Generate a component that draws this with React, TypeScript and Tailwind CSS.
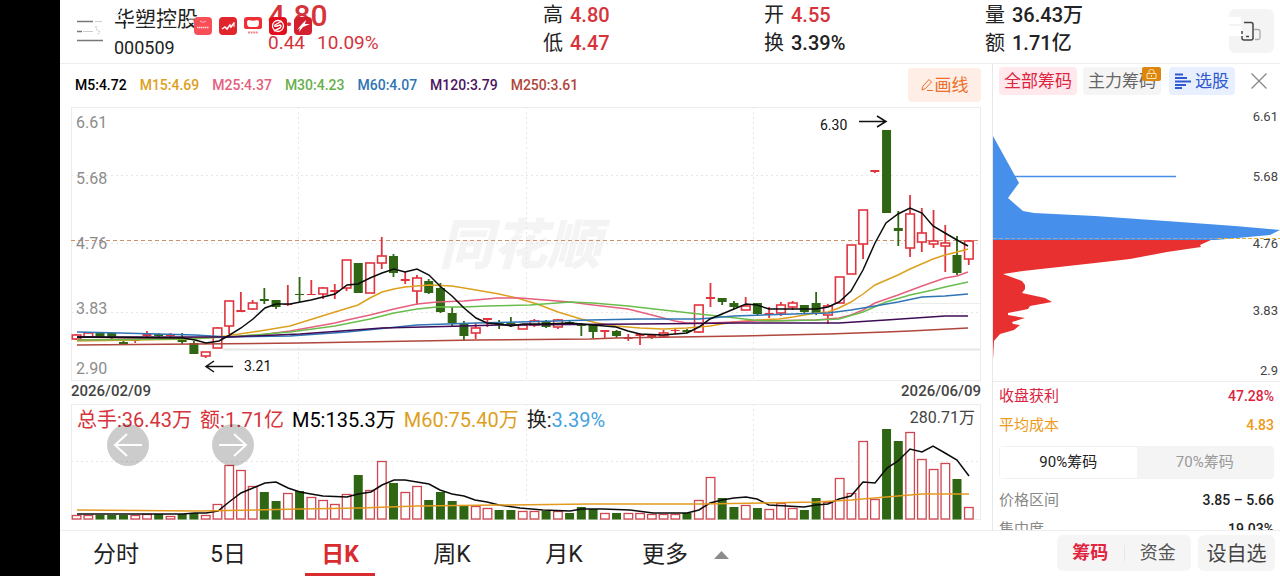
import React, { useState } from "react";

type Candle = ["r" | "g", number, number, number, number];

// direction, high, body top, body bottom, low (chart units)
const candles: Candle[] = [
  ["r", 334, 335, 339, 340], ["r", 332, 333, 337, 338], ["g", 333, 333, 337, 338], ["g", 333, 333, 337, 341],
  ["g", 341, 342, 344, 344], ["r", 339, 340, 341, 343], ["r", 331, 334, 336, 337], ["g", 333, 334, 336, 337],
  ["r", 333, 334, 336, 337], ["g", 333, 340, 342, 344], ["g", 341, 343, 354, 354], ["r", 352, 352, 356, 358],
  ["r", 327, 328, 348, 348], ["r", 301, 301, 326, 334], ["r", 292, 310, 312, 312], ["r", 300, 303, 309, 310],
  ["g", 288, 299, 301, 304], ["g", 300, 300, 307, 309], ["r", 285, 304, 305, 306], ["g", 277, 294, 295, 302],
  ["r", 280, 294, 295, 295], ["r", 287, 288, 294, 299], ["r", 284, 290, 292, 299], ["r", 260, 260, 288, 291],
  ["g", 263, 263, 293, 293], ["r", 263, 263, 293, 293], ["r", 237, 256, 263, 269], ["g", 254, 256, 273, 277],
  ["r", 272, 279, 281, 284], ["r", 275, 278, 291, 305], ["g", 279, 281, 293, 294], ["g", 283, 288, 312, 313],
  ["g", 307, 313, 323, 326], ["g", 321, 323, 336, 340], ["r", 323, 328, 333, 339], ["r", 318, 318, 320, 327],
  ["g", 320, 323, 325, 329], ["g", 317, 323, 325, 327], ["r", 324, 325, 329, 329], ["r", 319, 321, 325, 327],
  ["g", 320, 321, 327, 328], ["r", 319, 320, 327, 329], ["g", 321, 322, 324, 325], ["g", 323, 324, 326, 336],
  ["g", 324, 325, 332, 338], ["r", 330, 330, 332, 338], ["g", 330, 331, 336, 338], ["r", 334, 337, 339, 341],
  ["r", 333, 334, 336, 345], ["r", 334, 335, 337, 339], ["r", 330, 333, 336, 337], ["r", 329, 330, 331, 334],
  ["g", 329, 330, 332, 333], ["r", 305, 305, 332, 333], ["r", 283, 297, 299, 307], ["g", 298, 298, 302, 305],
  ["g", 301, 303, 307, 309], ["r", 297, 306, 310, 310], ["g", 303, 303, 314, 316], ["r", 307, 313, 315, 318],
  ["r", 302, 305, 313, 316], ["r", 301, 303, 307, 310], ["g", 305, 305, 312, 314], ["g", 292, 303, 313, 315],
  ["r", 304, 306, 315, 324], ["r", 277, 277, 303, 303], ["r", 245, 245, 274, 274], ["r", 210, 210, 244, 259],
  ["r", 171, 170, 172, 173], ["g", 130, 130, 213, 213], ["g", 211, 228, 231, 246], ["r", 195, 214, 248, 257],
  ["r", 208, 233, 242, 252], ["r", 210, 241, 244, 248], ["r", 225, 243, 246, 272], ["g", 236, 255, 273, 275],
  ["r", 240, 241, 259, 265],
];

const volumeTops = [
  515, 515, 515, 515, 515, 515, 514, 514, 516, 514, 513, 515, 504, 465, 470, 486, 492, 501, 493, 491,
  497, 500, 504, 494, 475, 490, 461, 483, 492, 486, 500, 492, 501, 505, 506, 508, 510, 510, 511, 511,
  511, 511, 513, 507, 509, 513, 513, 513, 513, 514, 514, 514, 513, 500, 477, 498, 507, 505, 508, 509,
  503, 508, 510, 498, 502, 478, 493, 441, 499, 429, 441, 432, 459, 469, 463, 479, 507,
];

const priceLines = [
  { color: "#b0463c", points: "77,345 195,344 300,343 476,340 590,339 616,338 740,336 828,334 886,332 910,331 968,328" },
  { color: "#dda01e", points: "77,341 195,339 226,336 260,331 290,326 335,312 358,305 370,298 382,292 394,289 405,287 429,285 452,286 476,290 499,294 517,298 537,304 558,312 581,319 597,323 616,326 640,328 663,329 687,328 710,326 733,322 757,320 779,319 793,317 816,313 828,312 839,308 851,302 863,294 875,285 898,275 910,269 933,259 945,255 957,252 968,249" },
  { color: "#e4607e", points: "77,340 228,337 260,335 290,331 335,323 347,320 370,315 394,309 417,304 437,302 464,301 487,299 497,298 520,298 570,302 593,305 628,309 652,315 675,321 687,323 710,323 757,321 816,320 839,318 851,315 863,310 875,303 898,295 922,286 945,278 957,276 968,272" },
  { color: "#68bd4c", points: "77,340 183,339 228,337 290,332 335,326 370,319 394,313 417,309 437,307 464,307 487,306 530,305 570,302 593,303 628,306 663,310 699,314 727,317 753,320 769,321 816,320 839,319 863,312 886,302 910,295 933,290 945,287 968,282" },
  { color: "#2f74b5", points: "77,332 120,333 195,335 228,337 290,336 347,332 417,325 476,323 520,322 590,320 640,319 699,319 734,316 793,314 828,313 851,310 875,306 898,302 922,297 945,296 968,294" },
  { color: "#3f0c57", points: "77,337 228,337 300,334 382,328 464,326 499,325 640,324 740,323 839,323 886,320 945,316 968,316" },
  { color: "#0b0b0b", points: "77,337 183,338 195,340 206,343 219,341 228,336 241,328 253,319 265,308 276,304 290,304 311,300 335,294 347,285 358,284 370,278 382,273 394,269 405,272 417,269 429,275 441,287 452,296 464,308 476,318 487,323 499,324 511,326 523,324 546,324 570,323 593,325 616,327 628,331 640,334 663,335 687,333 699,327 710,319 722,314 734,309 746,304 757,305 769,309 793,309 816,309 828,307 839,302 851,291 863,270 875,243 886,223 898,214 910,208 922,213 933,226 945,233 957,240 968,246" },
];

const volumeLines = [
  { color: "#0b0b0b", points: "77,514 183,514 195,513 206,513 218,511 229,502 241,493 253,488 265,483 276,482 288,488 300,492 311,494 323,496 347,497 358,494 371,492 382,485 394,480 405,480 417,482 429,484 440,490 452,494 464,496 475,500 487,502 499,505 520,508 543,510 570,511 582,509 603,509 630,510 653,513 687,513 699,510 710,503 722,500 734,498 746,497 757,499 769,505 804,507 816,505 828,504 839,499 851,496 863,482 875,483 887,468 898,461 910,449 922,452 933,446 945,453 957,460 969,476" },
  { color: "#e39a1f", points: "77,510 200,511 300,509 360,508 417,506 499,505 590,504 700,504 816,502 851,500 886,497 922,494 969,494" },
];

const averages = [
  { text: "M5:4.72", color: "text-black" },
  { text: "M15:4.69", color: "text-[#dda01e]" },
  { text: "M25:4.37", color: "text-[#e4607e]" },
  { text: "M30:4.23", color: "text-[#68b04c]" },
  { text: "M60:4.07", color: "text-[#2f74b5]" },
  { text: "M120:3.79", color: "text-[#4a1560]" },
  { text: "M250:3.61", color: "text-[#b0463c]" },
];

const priceLabels = [
  { text: "6.61", y: 128, sideY: 121 },
  { text: "5.68", y: 184, sideY: 181 },
  { text: "4.76", y: 249, sideY: 248 },
  { text: "3.83", y: 314, sideY: 315 },
  { text: "2.90", y: 374, sideY: 375 },
];

const RED = "#e0353f";
const GREEN = "#2f6614";
const candleX = (i: number) => 76.5 + i * 11.74;

const PriceChart: React.FC = () => (
  <svg viewBox="71 107 910 274" className="block w-full" aria-label="日K">
    <text x="520" y="264" textAnchor="middle" fontSize="54" fontWeight="900" fontStyle="italic" fill="#f4f4f4">
      同花顺
    </text>
    <g stroke="#e6e6e6" strokeDasharray="2 3">
      <path d="M71 175.5H981M71 243.5H981M71 312.5H981M298.5 107V381M526.5 107V381M753.5 107V381" />
    </g>
    <rect x="71.5" y="107.5" width="909" height="273" fill="none" stroke="#ececec" />
    <path d="M223 349.5H981" stroke="#e6e6e6" strokeWidth="2" />
    <path d="M820 303.5H981" stroke="#ececec" />
    <path d="M71 240.5H981" stroke="#cf9069" strokeDasharray="4 3" />
    {candles.map(([dir, high, top, bottom, low], i) => {
      const x = candleX(i);
      const color = dir === "r" ? RED : GREEN;
      const hollow = dir === "r" && bottom - top > 2;
      return (
        <g key={i} stroke={color}>
          {high < top && <path d={`M${x} ${high}V${top}`} strokeWidth="1.8" />}
          {low > bottom && <path d={`M${x} ${bottom}V${low}`} strokeWidth="1.8" />}
          {hollow ? (
            <rect x={x - 4.2} y={top} width="8.6" height={bottom - top} fill="white" strokeWidth="1.6" />
          ) : (
            <rect x={x - 4.5} y={top} width="9" height={bottom - top} fill={color} stroke="none" />
          )}
        </g>
      );
    })}
    {priceLines.map((line) => (
      <polyline key={line.color} points={line.points} fill="none" stroke={line.color} strokeWidth="1.5" />
    ))}
    {priceLabels.map((label) => (
      <text key={label.text} x="76" y={label.y} fontSize="16" fill="#8c8c8c">
        {label.text}
      </text>
    ))}
    <g fill="none" stroke="#111" strokeWidth="1.5">
      <path d="M233 366.5H206M214 361L206 366.5L214 372" />
      <path d="M859 121.5H886M877 116L886 121.5L877 127" />
    </g>
    <text x="244" y="371" fontSize="14" fill="#111">3.21</text>
    <text x="820" y="130" fontSize="14" fill="#111">6.30</text>
  </svg>
);

const VolumeChart: React.FC = () => (
  <svg viewBox="71 404 910 116" className="block w-full" aria-label="成交量">
    <path d="M71 461.5H981M298.5 404V520M526.5 404V520M753.5 404V520" stroke="#e6e6e6" strokeDasharray="2 3" />
    <rect x="71.5" y="404.5" width="909" height="115" fill="none" stroke="#ececec" />
    {volumeTops.map((top, i) => {
      const x = candleX(i);
      return candles[i][0] === "r" ? (
        <rect key={i} x={x - 4.2} y={top + 0.5} width="8.6" height={518.5 - top} fill="white" stroke="#cf4650" strokeWidth="1.3" />
      ) : (
        <rect key={i} x={x - 4.5} y={top} width="9" height={519.5 - top} fill={GREEN} />
      );
    })}
    {volumeLines.map((line) => (
      <polyline key={line.color} points={line.points} fill="none" stroke={line.color} strokeWidth="1.5" />
    ))}
  </svg>
);

const ChipChart: React.FC = () => (
  <svg viewBox="993 102 287 279" className="block w-full" aria-label="筹码分布">
    <path
      d="M993 136L1019 183L1008 198L1023 211L1034 213L1095 216L1180 222L1235 226L1280 230L1270 235L1216 240H993Z"
      fill="#4690ec"
    />
    <path d="M1015 176.5H1176" stroke="#4690ec" strokeWidth="1.5" />
    <path
      d="M993 240H1211L1200 245L1201 247L1167 252L1130 259L1095 263L1050 268L1023 271L1003 274L1022 281L1025 285L1025 289L1022 293L1045 298L1052 302L1030 306L1028 309L1008 313L1008 315L1025 318L1012 322L1013 324L1020 325L1014 330L1000 334L994 341L993 360Z"
      fill="#e83030"
    />
    <path d="M993 238.5H1218" stroke="#9aa5b5" strokeDasharray="4 2" />
    <path d="M1218 238.5H1280" stroke="#e0b040" strokeDasharray="4 2" />
    {priceLabels.map((label) => (
      <text key={label.text} x="1278" y={label.sideY} fontSize="13" fill="#444" textAnchor="end">
        {label.text === "2.90" ? "2.9" : label.text}
      </text>
    ))}
  </svg>
);

const StatusIcons: React.FC = () => (
  <svg viewBox="0 0 118 18" className="absolute top-[17px] left-[134px] h-[18px] w-[118px]" aria-hidden="true">
    <rect width="18" height="18" rx="4" fill="#f84e58" />
    <path d="M6 4q3 3 6 0" stroke="#ffb3b5" fill="none" />
    <path d="M3 10.500H15" stroke="#ffd9da" strokeWidth="1.500" strokeDasharray="1.500 .5" />
    <rect x="25" width="18" height="18" rx="4" fill="#e0252d" />
    <path d="M28 12L31 10L33 12L36 8L37 10L40 6" stroke="white" strokeWidth="1.500" fill="none" />
    <path d="M40 5V10" stroke="white" />
    <path d="M53 0H65Q68 0 68 3V10Q68 12 65 12H53Q50 12 50 10V3Q50 0 53 0Z" fill="#ee3036" />
    <path d="M55 3Q59 4.500 63 3Q65 3 65 6Q65 10 62 10H56Q53 10 53 6Q53 3 55 3Z" fill="white" />
    <path d="M54 15.500H64" stroke="#e98b90" strokeWidth="2" strokeDasharray="2 .6" />
    <rect x="75" width="18" height="18" rx="4" fill="#e00f1b" />
    <circle cx="84" cy="9" r="5.500" fill="none" stroke="white" strokeWidth="1.300" />
    <path d="M88 4L81 8Q80 10 83 9L86 8Q88 9 86 11L80 14" stroke="white" strokeWidth="1.400" fill="none" />
    <rect x="100" width="18" height="18" rx="4" fill="#d32030" />
    <path d="M103 13L108 7L112 3L111 7H116L109 10L105 15L106 11Z" fill="white" />
  </svg>
);

interface QuoteProps {
  label: string;
  value: string;
  red?: boolean;
}

const Quote: React.FC<QuoteProps> = ({ label, value, red }) => (
  <div className="flex items-center gap-[7px] text-xl leading-7 text-[#222]">
    <span>{label}</span>
    <span className={red ? "font-medium text-[#d6333b]" : "font-medium"}>{value}</span>
  </div>
);

const Header: React.FC = () => (
  <header className="relative grid h-16 shrink-0 grid-cols-[483fr_221fr_221fr_295fr] border-b border-[#eeeeee] pt-px">
    <div className="flex">
      <button type="button" aria-label="菜单" className="mt-[19px] ml-[17px] h-[22px] w-[26px]">
        <svg viewBox="0 0 26 22" className="h-full w-full" fill="none" stroke="#777">
          <path d="M0 1.500H16" strokeWidth="1.500" />
          <path d="M18 1.500H25" stroke="#ccc" />
          <path d="M0 11.500H5" strokeWidth="1.500" />
          <path d="M6 11.500H16" stroke="#ccc" />
          <path d="M19 6V9L23 12L20 15" stroke="#bbb" strokeDasharray="2 1" />
          <path d="M0 20.500H26" strokeWidth="1.500" />
        </svg>
      </button>
      <div className="ml-[11px] w-[154px] text-[#222]">
        <h1 className="pt-1 text-[21px] leading-7">华塑控股</h1>
        <p className="text-lg leading-[30px]">000509</p>
      </div>
      <div className="text-[#d6333b]">
        <p className="text-3xl leading-[30px] font-medium">4.80</p>
        <p className="flex gap-3 text-[19px] leading-6">
          <span>0.44</span>
          <span>10.09%</span>
        </p>
      </div>
    </div>
    <svg viewBox="0 0 90 24" className="absolute top-2 left-[52px] h-6 w-[90px]" stroke="white" aria-hidden="true">
      <path d="M0 7H9M26 17H40M52 18H64M70 14H90M4 18H12M46 9H50" strokeWidth="1.500" />
      <path d="M8 2L3 8M30 4V7M76 10H84M15 14V18" strokeWidth="1.500" />
    </svg>
    <StatusIcons />
    <div>
      <Quote label="高" value="4.80" red />
      <Quote label="低" value="4.47" red />
    </div>
    <div>
      <Quote label="开" value="4.55" red />
      <Quote label="换" value="3.39%" />
    </div>
    <div className="flex justify-between pr-[6px]">
      <div>
        <Quote label="量" value="36.43万" />
        <Quote label="额" value="1.71亿" />
      </div>
      <button type="button" aria-label="竖屏" className="mt-2 h-11 w-[45px] rounded-md bg-[#f4f4f4]">
        <svg viewBox="0 0 45 44" className="h-full w-full" fill="none">
          <path d="M0 8H12V15H0ZM0 17H13V27H0Z" fill="white" />
          <path d="M15 13.500H22Q24 13.500 24 15.500V29Q24 31 22 31H15Q13 31 13 29V27M13 25V22" stroke="#444" strokeWidth="1.500" />
          <path d="M17 27.500H20" stroke="#444" strokeWidth="1.500" />
          <path d="M25 20.500H29Q31 20.500 31 22.500V29Q31 30.500 29 30.500H26" stroke="#aaa" strokeWidth="1.300" />
        </svg>
      </button>
    </div>
  </header>
);

const ChipPanel: React.FC = () => {
  const [range, setRange] = useState("90");

  return (
    <aside className="w-[288px] shrink-0 overflow-hidden border-l border-[#e8e8e8]">
      <div className="flex h-[38px] items-start pt-[3px] pl-[6px] text-[17px] leading-7">
        <button type="button" className="h-7 w-[78px] rounded-sm bg-[#ffe9ec] text-[#de2440]">全部筹码</button>
        <button type="button" className="relative ml-[6px] h-7 w-[78px] rounded-sm bg-[#f5f5f5] text-[#666]">
          主力筹码
          <svg viewBox="0 0 19 14" className="absolute top-0 right-0 h-[14px] w-[19px]" fill="none">
            <rect width="19" height="14" rx="2" fill="#dc860d" />
            <path d="M5 6.500H14V11.500H5ZM7 6V4Q7 2.500 9.500 2.500T12 4V6M9.500 8V10" stroke="#ffe3b0" />
          </svg>
        </button>
        <button type="button" className="ml-2 flex h-7 w-[66px] items-center rounded-sm bg-[#e8effe] pl-[6px] text-[17px] text-[#3159cf]">
          <svg viewBox="0 0 16 16" className="mr-1 h-4 w-4" stroke="#3159cf" strokeWidth="2">
            <path d="M0 1.500H8M0 5H12M0 8.500H16M0 12H11M0 15H7" />
          </svg>
          选股
        </button>
        <button type="button" aria-label="关闭" className="mt-[6px] ml-4 h-4 w-4">
          <svg viewBox="0 0 16 16" className="h-4 w-4" stroke="#888" strokeWidth="1.300">
            <path d="M0.500 0.500L15.500 15.500M15.500 0.500L0.500 15.500" />
          </svg>
        </button>
      </div>
      <ChipChart />
      <div className="border-t border-[#ececec] pr-[6px] pl-[6px] text-[15px] leading-[29px]">
        <div className="flex justify-between text-[#dc2440]">
          <span>收盘获利</span>
          <span className="text-sm leading-[29px] font-medium">47.28%</span>
        </div>
        <div className="flex justify-between text-[#ee9a1a]">
          <span>平均成本</span>
          <span className="text-sm leading-[29px] font-medium">4.83</span>
        </div>
        <div className="mt-[6px] mb-[7px] grid h-[33px] grid-cols-2 rounded-sm border border-[#f2f2f2] bg-[#f4f4f4]">
          <button
            type="button"
            onClick={() => setRange("90")}
            className={range === "90" ? "bg-white text-[#222]" : "text-[#999]"}
          >
            90%筹码
          </button>
          <button
            type="button"
            onClick={() => setRange("70")}
            className={range === "70" ? "bg-white text-[#222]" : "text-[#999]"}
          >
            70%筹码
          </button>
        </div>
        <div className="flex justify-between text-[#888]">
          <span>价格区间</span>
          <span className="text-sm leading-[29px] font-medium text-[#222]">3.85 – 5.66</span>
        </div>
        <div className="flex justify-between text-[#888]">
          <span>集中度</span>
          <span className="text-sm leading-[29px] font-medium text-[#222]">19.03%</span>
        </div>
      </div>
    </aside>
  );
};

const periods = ["分时", "5日", "日K", "周K", "月K"];

const Footer: React.FC = () => {
  const [period, setPeriod] = useState("日K");

  return (
    <footer className="flex h-[46px] shrink-0 items-stretch border-t border-[#eeeeee] bg-white text-[#222]">
      {periods.map((name) => (
        <button
          key={name}
          type="button"
          onClick={() => setPeriod(name)}
          className={
            period === name
              ? "relative w-28 pt-[3px] text-[23px] font-bold text-[#d92c30]"
              : "relative w-28 pt-[3px] text-[23px]"
          }
        >
          {name}
          {period === name && <span className="absolute bottom-0 left-[21px] h-[3px] w-[70px] bg-[#d92c30]" />}
        </button>
      ))}
      <button type="button" className="ml-[22px] flex items-center gap-[26px] pt-[3px] text-[23px]">
        更多
        <svg viewBox="0 0 15 8" className="h-2 w-[15px]" fill="#8b8b8b">
          <path d="M0 8L7.500 0L15 8Z" />
        </svg>
      </button>
      <div className="mt-1 mr-[5px] mb-[5px] ml-auto flex gap-[7px]">
        <div className="flex w-[134px] items-center rounded-md bg-[#f5f5f5] text-lg">
          <button type="button" className="flex-1 font-bold text-[#e22440]">筹码</button>
          <span className="h-4 w-px bg-[#e6e6e6]" />
          <button type="button" className="flex-1 text-[#555]">资金</button>
        </div>
        <button type="button" className="w-[77px] rounded-md bg-[#f5f5f5] pt-[2px] text-xl text-[#444]">设自选</button>
      </div>
    </footer>
  );
};

const App: React.FC = () => {
  return (
    <div className="flex h-screen overflow-hidden bg-white font-['Roboto','Noto_Sans_CJK_SC',sans-serif]">
      <div className="w-[60px] shrink-0 bg-black" />
      <div className="flex min-w-0 flex-1 flex-col">
        <Header />
        <div className="flex min-h-0 flex-1">
          <main className="min-w-0 flex-1 px-[11px]">
            <div className="flex h-[43px] items-center gap-[13px] pb-px pl-1 text-sm font-medium">
              {averages.map((item) => (
                <span key={item.text} className={item.color}>{item.text}</span>
              ))}
              <button
                type="button"
                className="ml-auto flex h-[34px] w-[73px] items-center justify-center gap-[2px] rounded-sm bg-[#ffeee6] text-[17px] font-normal text-[#ea702d]"
              >
                <svg viewBox="0 0 12 14" className="h-[14px] w-3" fill="none" stroke="#ea702d">
                  <path d="M1 12L2 8L8 1.500L10.500 4L4.500 10.500L1 12M6 12.500H12" />
                </svg>
                画线
              </button>
            </div>
            <PriceChart />
            <div className="flex h-[23px] items-start justify-between text-[15px] leading-5 font-medium text-[#444]">
              <span>2026/02/09</span>
              <span>2026/06/09</span>
            </div>
            <div className="relative">
              <VolumeChart />
              <div className="absolute inset-x-0 top-0 flex gap-2 pt-[2px] pr-[6px] pl-[6px] text-xl leading-7">
                <span className="text-[#d6333b]">总手:36.43万</span>
                <span className="text-[#d6333b]">额:1.71亿</span>
                <span className="text-black">M5:135.3万</span>
                <span className="text-[#dda01e]">M60:75.40万</span>
                <span className="text-[#222]">
                  换:<span className="text-[#45a3de]">3.39%</span>
                </span>
                <span className="ml-auto text-base leading-6 text-[#444]">280.71万</span>
              </div>
              <div className="absolute top-5 left-9 flex gap-[63px]">
                <button type="button" aria-label="向左" className="h-[42px] w-[42px] rounded-full bg-black/20">
                  <svg viewBox="0 0 42 42" fill="none" stroke="white" strokeWidth="2">
                    <path d="M35 21H8M20 10L8 21L20 32" />
                  </svg>
                </button>
                <button type="button" aria-label="向右" className="h-[42px] w-[42px] rounded-full bg-black/20">
                  <svg viewBox="0 0 42 42" fill="none" stroke="white" strokeWidth="2">
                    <path d="M7 21H34M22 10L34 21L22 32" />
                  </svg>
                </button>
              </div>
            </div>
          </main>
          <ChipPanel />
        </div>
        <Footer />
      </div>
    </div>
  );
};

export default App;
